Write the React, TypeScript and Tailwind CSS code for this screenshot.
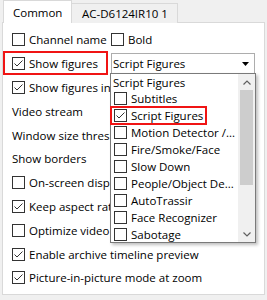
import React from 'react';

function Box({ checked = false }: { checked?: boolean }) {
  return (
    <span className="w-[13px] h-[13px] shrink-0 border border-[#333333] bg-white flex items-center justify-center">
      {checked && (
        <svg width="11" height="11" viewBox="0 0 11 11">
          <path d="M1.5 5.5 L4 8 L9.5 2.5" fill="none" stroke="#333333" strokeWidth="1" />
        </svg>
      )}
    </span>
  );
}

function Check({ label, checked = false }: { label: string; checked?: boolean }) {
  return (
    <div className="flex items-center gap-[4px] whitespace-nowrap">
      <Box checked={checked} />
      <span>{label}</span>
    </div>
  );
}

const items = [
  { label: 'Subtitles', checked: false },
  { label: 'Script Figures', checked: true },
  { label: 'Motion Detector /...', checked: false },
  { label: 'Fire/Smoke/Face', checked: false },
  { label: 'Slow Down', checked: false },
  { label: 'People/Object De...', checked: false },
  { label: 'AutoTrassir', checked: false },
  { label: 'Face Recognizer', checked: false },
  { label: 'Sabotage', checked: false },
];

export default function App() {
  return (
    <div
      className="relative w-[267px] h-[300px] bg-[#f0f0f0] overflow-hidden text-[11.5px] leading-[15px] text-black"
      style={{ fontFamily: '"Open Sans", "Noto Sans", sans-serif' }}
    >
      {/* tabs */}
      <div className="flex items-end h-[23px] pl-[3px]">
        <div className="h-[23px] w-[69px] bg-white border-l border-t border-r border-[#d9d9d9] pl-[9px] flex items-center relative z-10">
          Common
        </div>
        <div className="h-[20px] w-[106px] bg-[#f0f0f0] border-t border-r border-[#d9d9d9] pl-[10px] flex items-center">
          AC-D6124IR10 1
        </div>
      </div>

      {/* panel */}
      <div className="-mt-px mx-[2px] h-[273px] bg-white border border-[#d9d9d9] pt-[5px]">
        <div className="h-[23.8px] flex items-center pl-[9px]">
          <div className="w-[99px]">
            <Check label="Channel name" />
          </div>
          <Check label="Bold" />
        </div>
        <div className="h-[23.8px] flex items-center">
          <div className="w-[105px] h-[24px] -mt-px border-2 border-[#f01414] pl-[7px] flex items-center">
            <Check label="Show figures" checked />
          </div>
          <div className="ml-[3px] w-[144px] h-[21px] border border-[#adadad] flex items-center justify-between pl-[1px] pr-[5px]">
            <span>Script Figures</span>
            <svg width="7" height="4" viewBox="0 0 7 4">
              <path d="M0 0 L7 0 L3.5 4 Z" fill="#000" />
            </svg>
          </div>
        </div>
        <div className="h-[23.8px] flex items-center pl-[9px]">
          <Check label="Show figures in" checked />
        </div>
        <div className="h-[23.8px] flex items-center pl-[9px] whitespace-nowrap">Video stream</div>
        <div className="h-[23.8px] flex items-center pl-[9px] whitespace-nowrap">Window size thresh</div>
        <div className="h-[23.8px] flex items-center pl-[9px] whitespace-nowrap">Show borders</div>
        <div className="h-[23.8px] flex items-center pl-[9px]">
          <Check label="On-screen displa" />
        </div>
        <div className="h-[23.8px] flex items-center pl-[9px]">
          <Check label="Keep aspect rati" checked />
        </div>
        <div className="h-[23.8px] flex items-center pl-[9px]">
          <Check label="Optimize video" />
        </div>
        <div className="h-[23.8px] flex items-center pl-[9px]">
          <Check label="Enable archive timeline preview" checked />
        </div>
        <div className="h-[23.8px] flex items-center pl-[9px]">
          <Check label="Picture-in-picture mode at zoom" checked />
        </div>
      </div>

      {/* open dropdown list */}
      <div className="absolute left-[110px] top-[73px] w-[146px] h-[170px] bg-white border border-[#7a7a7a] shadow-[2px_2px_3px_rgba(0,0,0,0.25)] flex">
        <div className="flex-1 relative">
          <div className="h-[16px] flex items-center pl-[2px] whitespace-nowrap">Script Figures</div>
          {items.map((it) => (
            <div key={it.label} className="h-[17px] flex items-center pl-[3px]">
              <Check label={it.label} checked={it.checked} />
            </div>
          ))}
          <div className="absolute left-[-1px] top-[32px] w-[97px] h-[19px] border-2 border-[#f01414]" />
        </div>
        <div className="w-[17px] bg-[#f0f0f0] flex flex-col items-center">
          <div className="h-[16px] flex items-center justify-center">
            <svg width="8" height="5" viewBox="0 0 8 5">
              <path d="M0.5 4.5 L4 1 L7.5 4.5" fill="none" stroke="#606060" strokeWidth="1.2" />
            </svg>
          </div>
          <div className="w-[13px] h-[95px] bg-[#cdcdcd]" />
          <div className="flex-1" />
          <div className="h-[16px] flex items-center justify-center">
            <svg width="8" height="5" viewBox="0 0 8 5">
              <path d="M0.5 0.5 L4 4 L7.5 0.5" fill="none" stroke="#606060" strokeWidth="1.2" />
            </svg>
          </div>
        </div>
      </div>
    </div>
  );
}
